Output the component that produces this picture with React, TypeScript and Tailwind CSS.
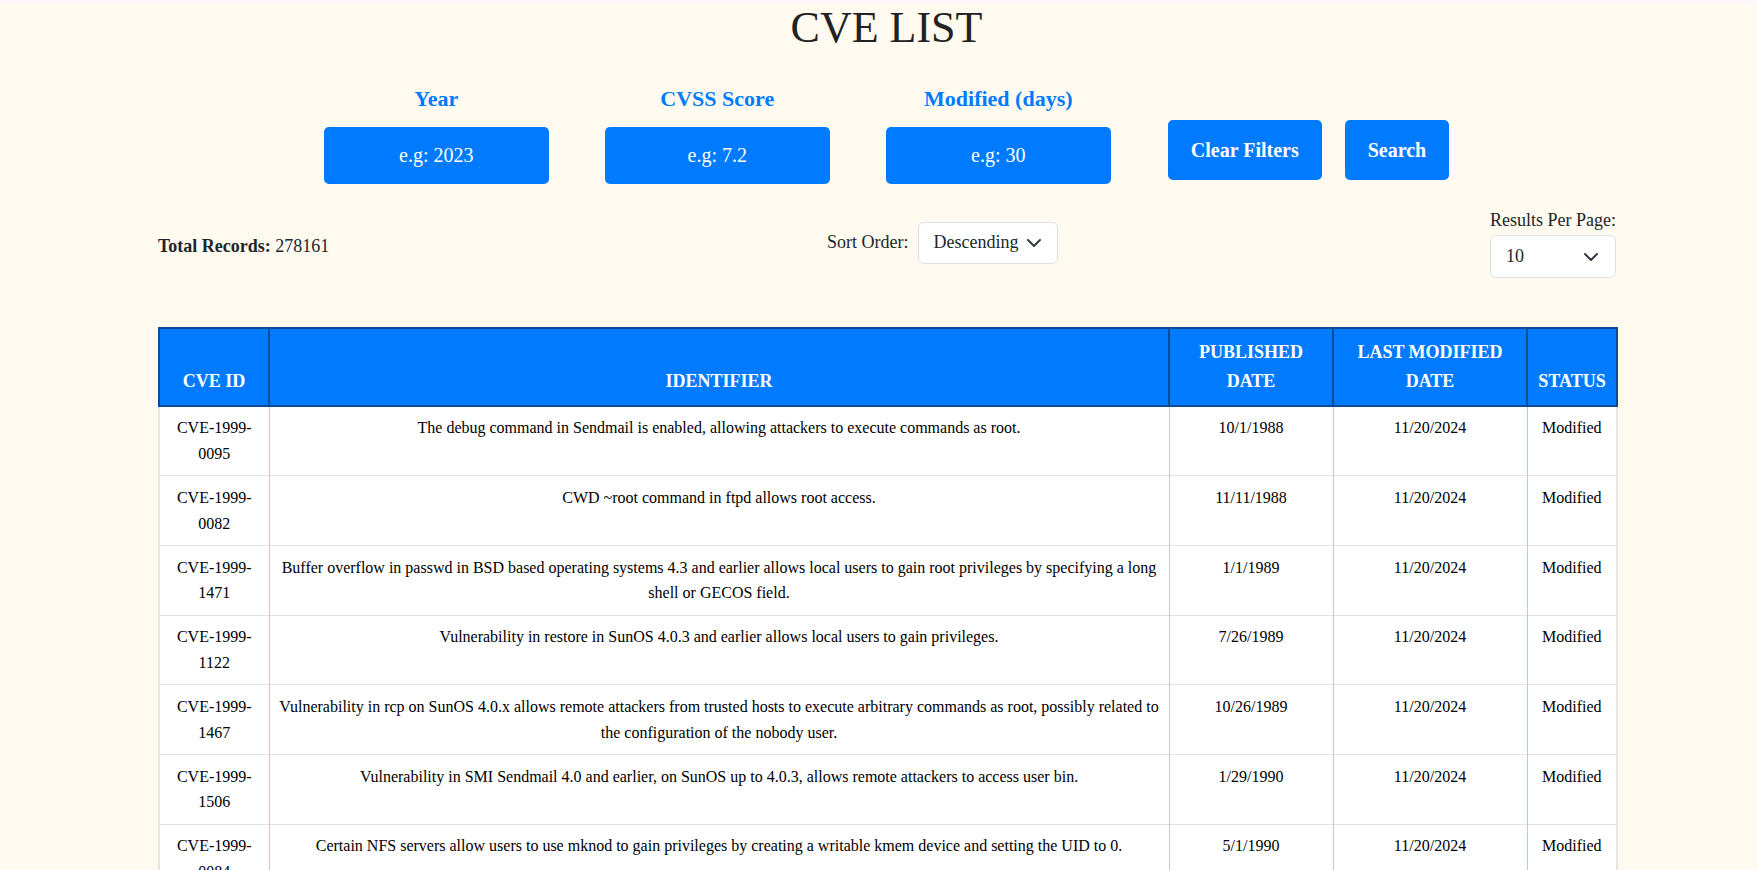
import React from 'react';

const rows = [
  { id: 'CVE-1999-0095', text: 'The debug command in Sendmail is enabled, allowing attackers to execute commands as root.', published: '10/1/1988' },
  { id: 'CVE-1999-0082', text: 'CWD ~root command in ftpd allows root access.', published: '11/11/1988' },
  { id: 'CVE-1999-1471', text: 'Buffer overflow in passwd in BSD based operating systems 4.3 and earlier allows local users to gain root privileges by specifying a long shell or GECOS field.', published: '1/1/1989' },
  { id: 'CVE-1999-1122', text: 'Vulnerability in restore in SunOS 4.0.3 and earlier allows local users to gain privileges.', published: '7/26/1989' },
  { id: 'CVE-1999-1467', text: 'Vulnerability in rcp on SunOS 4.0.x allows remote attackers from trusted hosts to execute arbitrary commands as root, possibly related to the configuration of the nobody user.', published: '10/26/1989' },
  { id: 'CVE-1999-1506', text: 'Vulnerability in SMI Sendmail 4.0 and earlier, on SunOS up to 4.0.3, allows remote attackers to access user bin.', published: '1/29/1990' },
  { id: 'CVE-1999-0084', text: 'Certain NFS servers allow users to use mknod to gain privileges by creating a writable kmem device and setting the UID to 0.', published: '5/1/1990' },
];

function Chevron() {
  return (
    <svg width="16" height="16" viewBox="0 0 16 16" fill="none" stroke="#343a40" strokeWidth="2" strokeLinecap="round" strokeLinejoin="round">
      <path d="m2 5 6 6 6-6" />
    </svg>
  );
}

function Filter({ label, placeholder }: { label: string; placeholder: string }) {
  return (
    <div className="flex flex-col items-center w-[225px]">
      <label className="text-[22px] leading-[26px] font-bold text-[#007bff]">{label}</label>
      <input
        placeholder={placeholder}
        className="mt-[15px] w-[225px] h-[57px] rounded-[5px] bg-[#007bff] text-center text-[20px] text-white placeholder:text-white outline-none"
      />
    </div>
  );
}

export default function App() {
  return (
    <div className="min-h-screen bg-[#fffaf0] text-[#212529]" style={{ fontFamily: '"Liberation Serif", "Times New Roman", serif' }}>
      <div className="h-1 bg-[#fdf6fb]" />
      <h1 className="pt-[2px] pl-4 text-center text-[44px] leading-[44px] text-[#222]">CVE LIST</h1>

      <div className="mt-9 flex items-start justify-center pl-4">
        <Filter label="Year" placeholder="e.g: 2023" />
        <div className="w-14" />
        <Filter label="CVSS Score" placeholder="e.g: 7.2" />
        <div className="w-14" />
        <Filter label="Modified (days)" placeholder="e.g: 30" />
        <button className="ml-[57px] mt-[34px] h-[60px] px-[23px] rounded-[5px] bg-[#007bff] text-[20px] font-bold text-white">Clear Filters</button>
        <button className="ml-[23px] mt-[34px] h-[60px] px-[23px] rounded-[5px] bg-[#007bff] text-[20px] font-bold text-white">Search</button>
      </div>

      <div className="ml-[158px] w-[1458px] mt-[23px] flex items-center text-[18px] leading-[27px]">
        <div className="w-[669px] mt-2">
          <span className="font-bold">Total Records:</span> 278161
        </div>
        <div className="flex items-center">
          <span>Sort Order:</span>
          <div className="ml-[10px] flex h-[42px] w-[140px] items-center justify-between rounded-md border border-[#dee2e6] bg-white pl-[14px] pr-[15px]">
            <span>Descending</span>
            <Chevron />
          </div>
        </div>
        <div className="ml-auto flex w-[126px] flex-col">
          <span>Results Per Page:</span>
          <div className="mt-[1px] flex h-[43px] items-center justify-between rounded-md border border-[#dee2e6] bg-white pl-[15px] pr-[16px]">
            <span>10</span>
            <Chevron />
          </div>
        </div>
      </div>

      <div className="ml-[158px] w-[1458px] mt-[49px]">
        <table className="w-full table-fixed border-collapse border-2 border-[#e4e4e4] bg-white text-center">
          <colgroup>
            <col className="w-[110px]" />
            <col className="w-[900px]" />
            <col className="w-[164px]" />
            <col className="w-[194px]" />
            <col className="w-[90px]" />
          </colgroup>
          <thead>
            <tr className="bg-[#007bff] text-white">
              {['CVE ID', 'IDENTIFIER', 'PUBLISHED DATE', 'LAST MODIFIED DATE', 'STATUS'].map((h) => (
                <th key={h} className="border-2 border-[#0a4b91] p-[9px] align-bottom text-[18px] leading-[28.8px] font-bold">
                  {h}
                </th>
              ))}
            </tr>
          </thead>
          <tbody className="text-[16px] leading-[25.6px] text-black">
            {rows.map((r) => (
              <tr key={r.id} className="border-b border-[#dee2e6]">
                <td className="border-l border-[#a8cbf8] px-[9px] py-[8.75px] align-top">{r.id}</td>
                <td className="border-l border-[#a8cbf8] px-[9px] py-[8.75px] align-top">{r.text}</td>
                <td className="border-l border-[#a8cbf8] px-[9px] py-[8.75px] align-top">{r.published}</td>
                <td className="border-l border-[#a8cbf8] px-[9px] py-[8.75px] align-top">11/20/2024</td>
                <td className="border-l border-[#a8cbf8] px-[9px] py-[8.75px] align-top">Modified</td>
              </tr>
            ))}
          </tbody>
        </table>
      </div>
    </div>
  );
}
